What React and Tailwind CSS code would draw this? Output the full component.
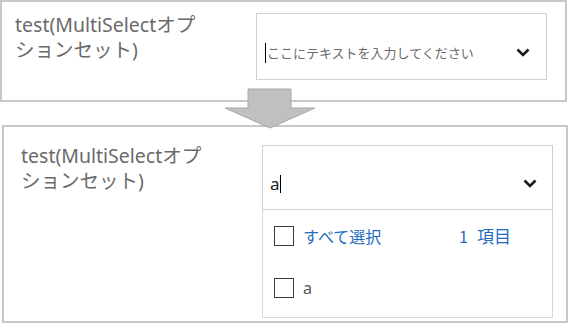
function Chevron() {
  return (
    <svg width="14" height="9" viewBox="0 0 14 9" className="shrink-0">
      <polyline points="1.5,1.5 7,7 12.5,1.5" fill="none" stroke="#1a1a1a" strokeWidth="2.6" />
    </svg>
  );
}

function Checkbox() {
  return <span className="w-[20px] h-[20px] border-[1.5px] border-[#3a3a3a] bg-white shrink-0" />;
}

function Label() {
  return (
    <div className="text-[19.5px] leading-[25px] text-[#6a6a6a]">
      test(MultiSelectオプ
      <br />
      ションセット)
    </div>
  );
}

export default function App() {
  return (
    <div className="relative w-[572px] h-[324px] bg-white overflow-hidden font-['Noto_Sans','Noto_Sans_CJK_JP',sans-serif]">
      {/* before */}
      <div className="w-[567px] h-[102px] border-2 border-[#c8c8c8] flex">
        <div className="w-[254px] pl-[13px] pt-[10px]">
          <Label />
        </div>
        <div className="mt-[11px] w-[291px] h-[67px] border border-[#d0d0d0] flex items-center pt-3 pl-[8px] pr-[16px]">
          <span className="w-px h-[20px] bg-black" />
          <span className="ml-px text-[13px] text-[#6a6a6a] font-['Noto_Sans_CJK_JP',sans-serif]">
            ここにテキストを入力してください
          </span>
          <span className="ml-auto">
            <Chevron />
          </span>
        </div>
      </div>

      {/* after */}
      <div className="mt-[23px] ml-[2px] w-[566px] h-[198px] border-2 border-[#c8c8c8] flex overflow-hidden">
        <div className="w-[258px] pl-[17px] pt-[16px] shrink-0">
          <Label />
          <div className="mt-[125px] text-[19px] leading-[25px] text-[#999999]">MultiSelect項目</div>
        </div>
        <div className="mt-[18px] w-[291px] shrink-0">
          <div className="h-[65px] border border-[#d0d0d0] flex items-center pt-3 pl-[7px] pr-[15px]">
            <span className="text-[17px] text-[#222222]">a</span>
            <span className="w-px h-[18px] bg-black" />
            <span className="ml-auto">
              <Chevron />
            </span>
          </div>
          <div className="h-[108px] border border-t-0 border-[#d8d8d8] pl-[11px]">
            <div className="h-[52px] flex items-center">
              <Checkbox />
              <span className="ml-[9px] w-[156px] text-[16px] text-[#1e6bc0] font-['Noto_Sans_CJK_JP',sans-serif]">
                すべて選択
              </span>
              <span className="text-[16px] text-[#1e6bc0] font-['Noto_Sans_CJK_JP',sans-serif]">
                1<span className="ml-[9px] text-[17px]">項目</span>
              </span>
            </div>
            <div className="h-[52px] flex items-center">
              <Checkbox />
              <span className="ml-[9px] text-[16px] text-[#555555]">a</span>
            </div>
          </div>
        </div>
      </div>

      {/* arrow overlay */}
      <svg className="absolute left-[224px] top-[88px]" width="93" height="42" viewBox="0 0 93 42">
        <polygon
          points="24,1 67,1 67,20 91,20 46,40 1,20 24,20"
          fill="#c0c0c0"
          stroke="#a8a8a8"
          strokeWidth="1"
        />
      </svg>
    </div>
  );
}
